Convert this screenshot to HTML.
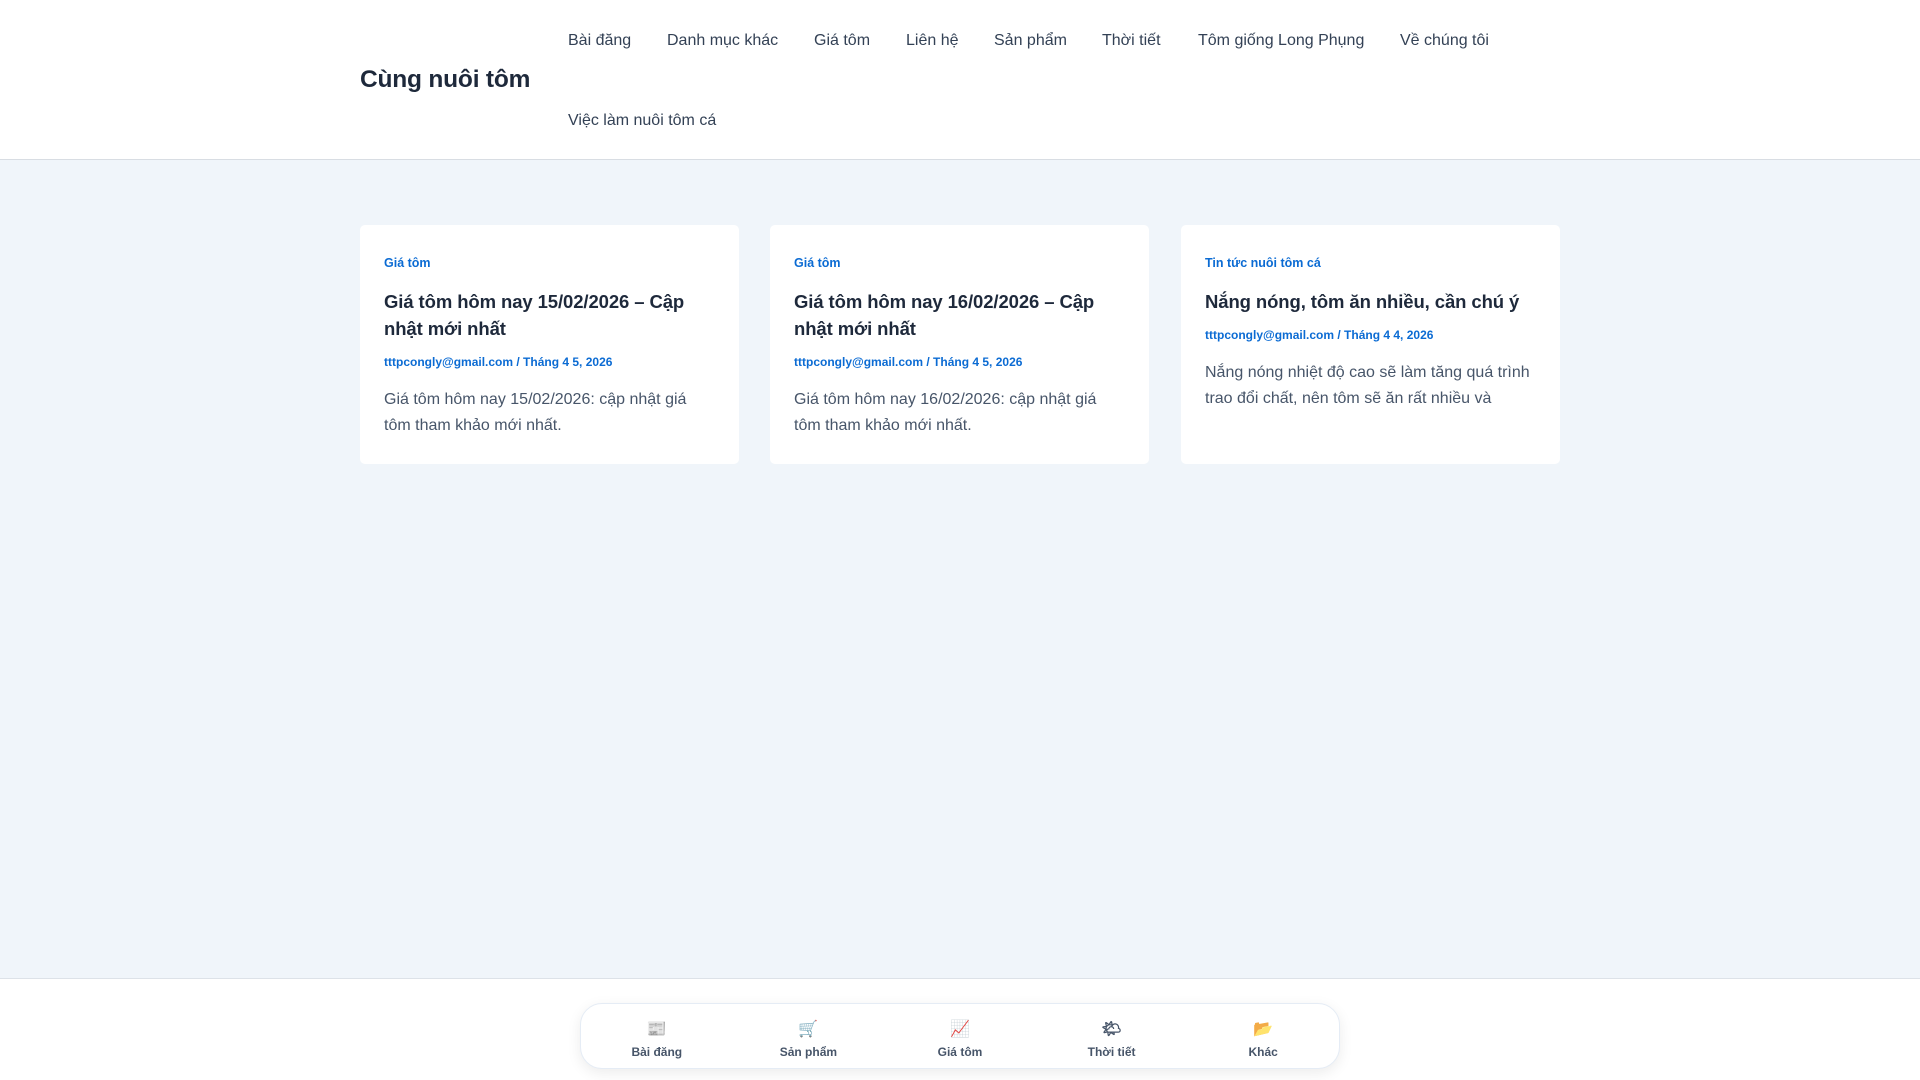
<!DOCTYPE html>
<html><head><meta charset="utf-8"><style>
*{margin:0;padding:0;box-sizing:border-box}
body{width:1920px;height:1080px;background:#f0f5fa;font-family:"Liberation Sans",sans-serif;position:relative;overflow:hidden;color:#1e293b}
header{position:absolute;left:0;top:0;width:1920px;height:160px;background:#fff;border-bottom:1px solid #d8dde3}
.title{position:absolute;left:360px;top:66px;font-size:24.5px;font-weight:bold;color:#1e293b;letter-spacing:-0.2px}
.nav a{position:absolute;top:32px;font-size:16px;color:#334155;text-decoration:none;white-space:nowrap}
.tag{position:absolute;left:568px;top:112px;font-size:16px;color:#334155}
.card{position:absolute;top:225px;width:379px;height:239px;background:#fff;border-radius:5px;padding:30px 24px}
.cat{font-size:12.5px;font-weight:bold;color:#0b6bd3;line-height:16px}
h2{font-size:18.5px;font-weight:bold;line-height:27px;margin-top:17px;color:#1e293b;letter-spacing:-0.1px}
.meta{font-size:12px;font-weight:bold;color:#0b6bd3;margin-top:12px;line-height:16px}
.ex{font-size:16px;line-height:26px;color:#475569;margin-top:17px}
footer{position:absolute;left:0;top:978px;width:1920px;height:102px;background:#fff;border-top:1px solid #dde2e8}
.bn{position:absolute;left:580px;top:1003px;width:760px;height:66px;background:#fff;border:1px solid #e5ecf5;border-radius:22px;box-shadow:0 4px 14px rgba(0,0,0,.08);display:flex}
.bn div{flex:1;text-align:center;font-size:12px;font-weight:bold;color:#475569;padding-top:15px}
.bn span{display:block;font-size:16px;height:20px;margin-bottom:6px}
</style></head><body>
<header>
<div class="title">Cùng nuôi tôm</div>
<div class="nav">
<a style="left:568px">Bài đăng</a><a style="left:667px">Danh mục khác</a><a style="left:814px">Giá tôm</a><a style="left:906px">Liên hệ</a><a style="left:994px">Sản phẩm</a><a style="left:1102px">Thời tiết</a><a style="left:1198px">Tôm giống Long Phụng</a><a style="left:1400px">Về chúng tôi</a>
</div>
<div class="tag">Việc làm nuôi tôm cá</div>
</header>
<div class="card" style="left:360px"><div class="cat">Giá tôm</div><h2>Giá tôm hôm nay 15/02/2026 – Cập nhật mới nhất</h2><div class="meta">tttpcongly@gmail.com / Tháng 4 5, 2026</div><div class="ex">Giá tôm hôm nay 15/02/2026: cập nhật giá tôm tham khảo mới nhất.</div></div>
<div class="card" style="left:770px"><div class="cat">Giá tôm</div><h2>Giá tôm hôm nay 16/02/2026 – Cập nhật mới nhất</h2><div class="meta">tttpcongly@gmail.com / Tháng 4 5, 2026</div><div class="ex">Giá tôm hôm nay 16/02/2026: cập nhật giá tôm tham khảo mới nhất.</div></div>
<div class="card" style="left:1181px"><div class="cat">Tin tức nuôi tôm cá</div><h2>Nắng nóng, tôm ăn nhiều, cần chú ý</h2><div class="meta">tttpcongly@gmail.com / Tháng 4 4, 2026</div><div class="ex">Nắng nóng nhiệt độ cao sẽ làm tăng quá trình trao đổi chất, nên tôm sẽ ăn rất nhiều và</div></div>
<footer></footer>
<div class="bn">
<div><span>📰</span>Bài đăng</div>
<div><span>🛒</span>Sản phẩm</div>
<div><span>📈</span>Giá tôm</div>
<div><span>🌤</span>Thời tiết</div>
<div><span>📂</span>Khác</div>
</div>
</body></html>
